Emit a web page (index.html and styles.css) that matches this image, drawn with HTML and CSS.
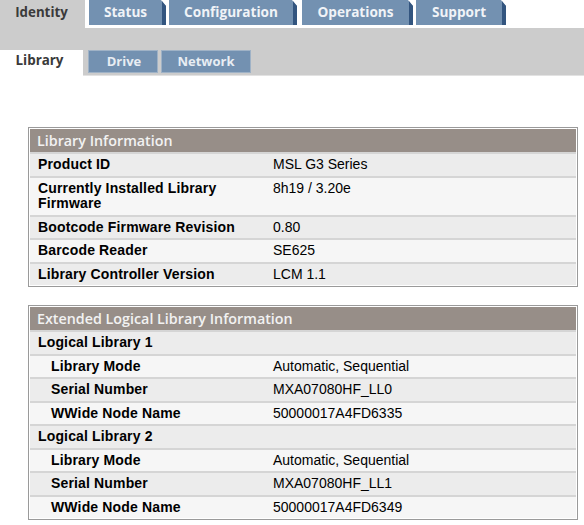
FILE: index.html
```html
<!DOCTYPE html>
<html>
<head>
<meta charset="utf-8">
<link rel="stylesheet" href="styles.css">
</head>
<body>
<div class="topnav">
  <div class="tab active">Identity</div>
  <div class="tab t-status">Status</div>
  <div class="tab t-config">Configuration</div>
  <div class="tab t-ops">Operations</div>
  <div class="tab t-support">Support</div>
</div>
<div class="subnav">
  <div class="stab active">Library</div>
  <div class="stab s-drive">Drive</div>
  <div class="stab s-net">Network</div>
</div>
<div class="content">
  <table class="info">
    <tr><th colspan="2">Library Information</th></tr>
    <tr class="odd"><td class="lbl">Product ID</td><td>MSL G3 Series</td></tr>
    <tr class="even"><td class="lbl">Currently Installed Library Firmware</td><td>8h19 / 3.20e</td></tr>
    <tr class="odd"><td class="lbl">Bootcode Firmware Revision</td><td>0.80</td></tr>
    <tr class="even"><td class="lbl">Barcode Reader</td><td>SE625</td></tr>
    <tr class="odd"><td class="lbl">Library Controller Version</td><td>LCM 1.1</td></tr>
  </table>
  <table class="info">
    <tr><th colspan="2">Extended Logical Library Information</th></tr>
    <tr class="odd"><td class="lbl">Logical Library 1</td><td></td></tr>
    <tr class="even"><td class="lbl sub">Library Mode</td><td>Automatic, Sequential</td></tr>
    <tr class="odd"><td class="lbl sub">Serial Number</td><td>MXA07080HF_LL0</td></tr>
    <tr class="even"><td class="lbl sub">WWide Node Name</td><td>50000017A4FD6335</td></tr>
    <tr class="odd"><td class="lbl">Logical Library 2</td><td></td></tr>
    <tr class="even"><td class="lbl sub">Library Mode</td><td>Automatic, Sequential</td></tr>
    <tr class="odd"><td class="lbl sub">Serial Number</td><td>MXA07080HF_LL1</td></tr>
    <tr class="even"><td class="lbl sub">WWide Node Name</td><td>50000017A4FD6349</td></tr>
  </table>
</div>
</body>
</html>
```
FILE: styles.css
```css
html, body {
  margin: 0;
  padding: 0;
  background: #ffffff;
}
body {
  font-family: "Liberation Sans", Arial, sans-serif;
  font-size: 14px;
  color: #000;
  width: 584px;
}
.topnav {
  display: flex;
  height: 28px;
  gap: 3px;
  background: #fff;
}
.tab {
  height: 25px;
  line-height: 24px;
  box-sizing: border-box;
  background: #7391b1;
  color: #f0f3f7;
  font-family: "Open Sans", sans-serif;
  font-weight: 700;
  font-size: 13.6px;
  text-align: center;
  border-right: 4px solid #33557f;
  clip-path: polygon(0 0, calc(100% - 5px) 0, 100% 6px, 100% 100%, 0 100%);
}
.tab.active {
  height: 28px;
  width: 85px;
  background: #cccccc;
  color: #3a3a3a;
  border-right: none;
  clip-path: none;
  margin-right: 1px;
  font-size: 13.3px;
  padding-right: 2px;
}
.t-status { width: 77px; }
.t-config { width: 128px; }
.t-ops { width: 111px; margin-left: 2px; }
.t-support { width: 90px; }
.subnav {
  background: #cccccc;
  height: 48px;
  box-sizing: border-box;
  padding-top: 22px;
  display: flex;
  align-items: flex-start;
  gap: 3px;
  border-bottom: 1px solid #e2e2e2;
}
.stab {
  height: 23px;
  line-height: 21px;
  box-sizing: border-box;
  background: #7391b1;
  border: 1px solid #9fb2c6;
  color: #e8edf3;
  font-family: "Open Sans", sans-serif;
  font-weight: 700;
  font-size: 13px;
  text-align: center;
}
.stab.active {
  background: #fff;
  color: #3a3a3a;
  border: none;
  height: 26px;
  width: 83px;
  margin-right: 2px;
  padding-right: 4px;
  font-size: 13.4px;
}
.s-drive { width: 70px; padding-left: 2px; }
.s-net { width: 90px; }
.content {
  padding: 51px 6px 0 28px;
  display: flex;
  flex-direction: column;
  gap: 18px;
}
.info {
  width: 550px;
  border: 1px solid #9a9a9a;
  border-collapse: separate;
  border-spacing: 0;
  padding: 1px;
  background: #fff;
}
.info th {
  background: #978e88;
  color: #f2f2f2;
  text-align: left;
  font-family: "Open Sans", sans-serif;
  font-weight: 600;
  font-size: 14.3px;
  height: 23px;
  padding: 0 7px;
  line-height: 23px;
}
.info td {
  padding: 3px 8px 3px 8px;
  line-height: 15.5px;
  border-top: 2px solid #d5d5d5;
  vertical-align: top;
}
.info td.lbl {
  width: 219px;
  font-weight: 700;
  letter-spacing: 0.15px;
}
.info td.sub {
  padding-left: 21px;
  width: 206px;
}
.odd td { background: #ececec; }
.even td { background: #f6f6f6; }
```
